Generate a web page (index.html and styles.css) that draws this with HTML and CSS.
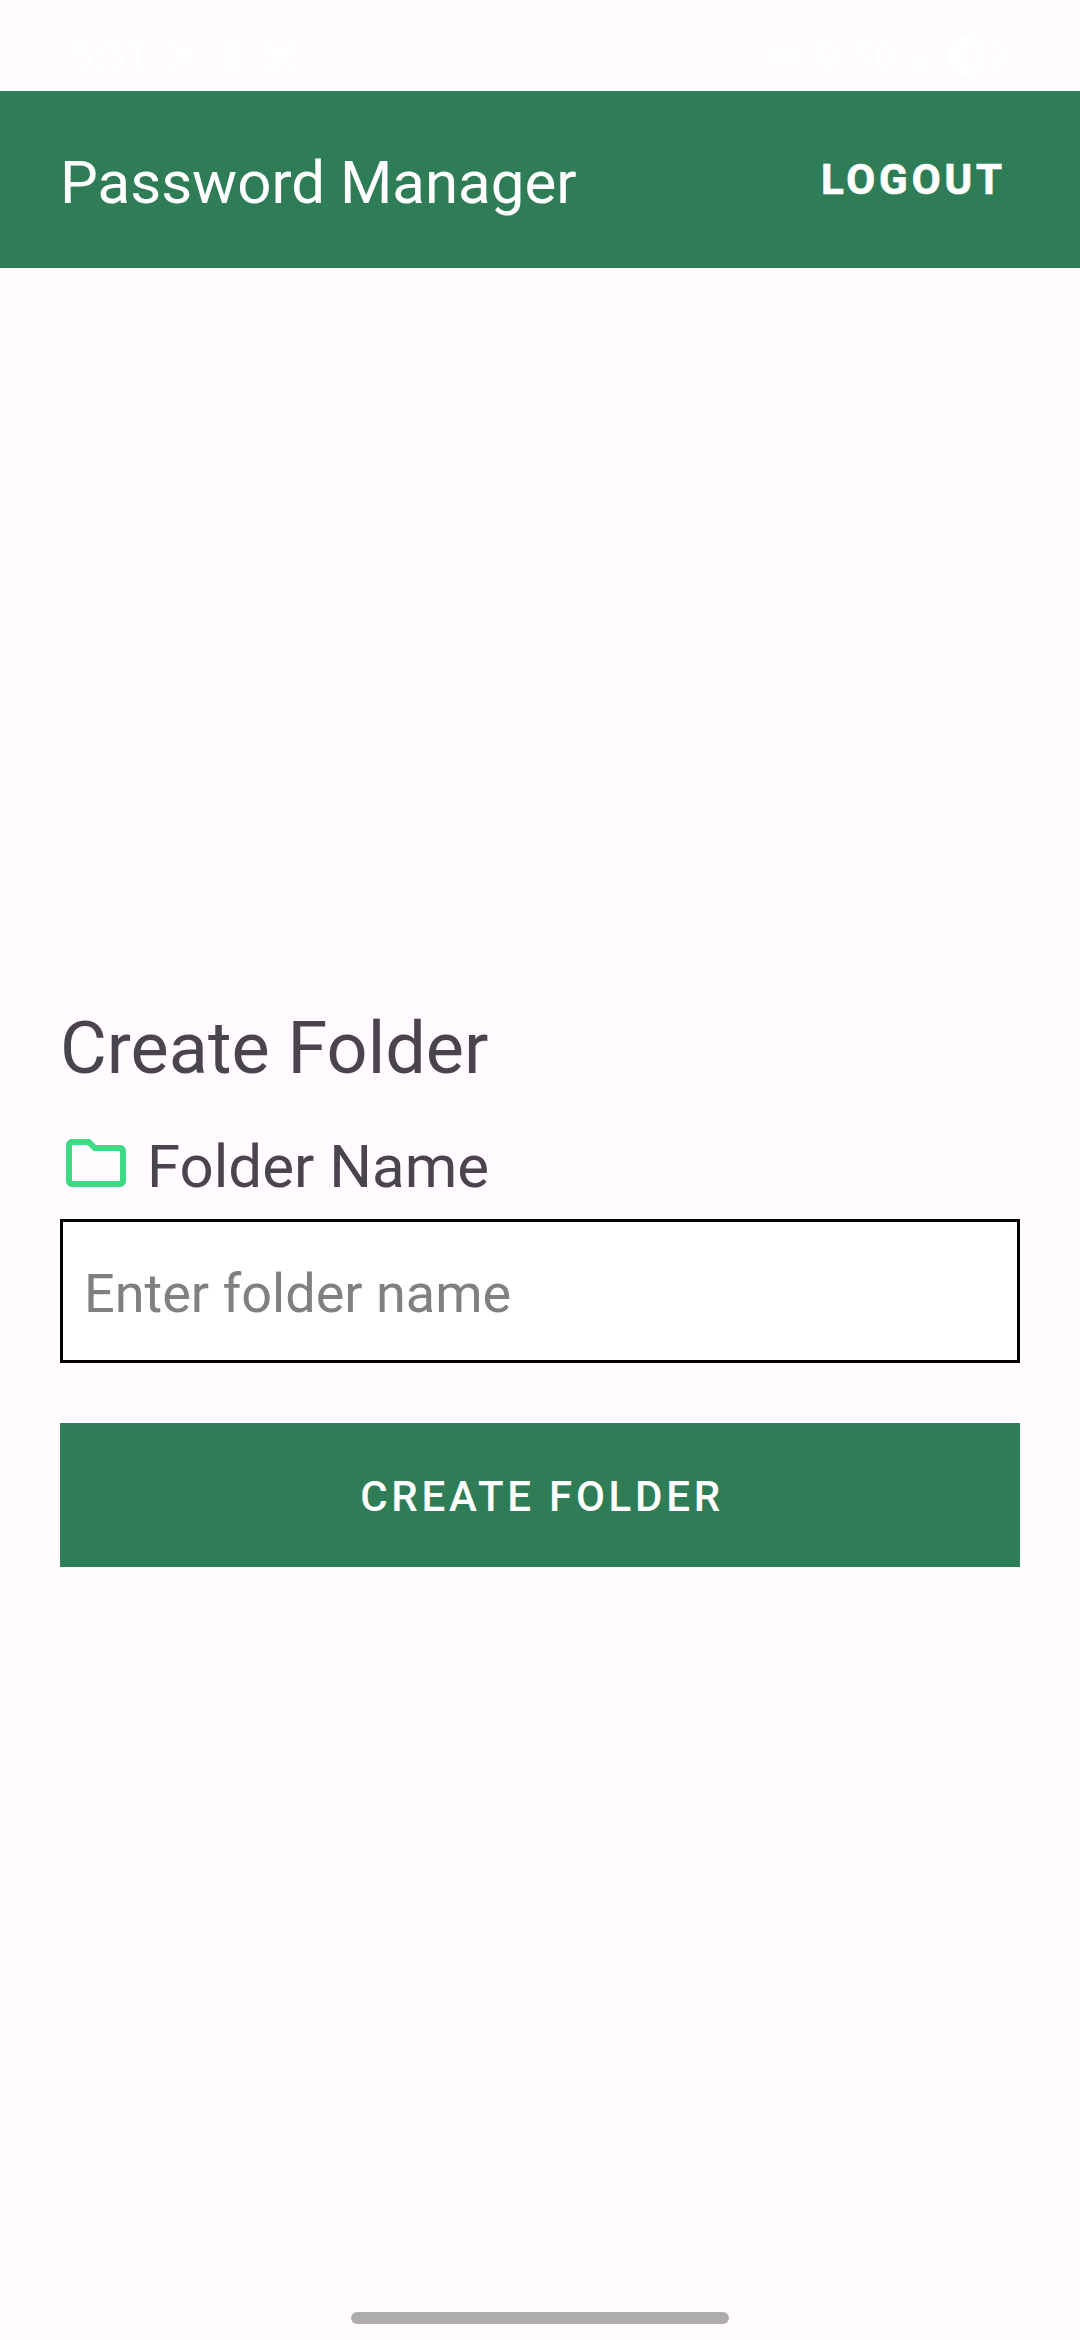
FILE: index.html
```html
<!DOCTYPE html>
<html lang="en">
<head>
<meta charset="utf-8">
<title>Password Manager</title>
<link rel="stylesheet" href="styles.css">
</head>
<body>
<div class="screen">
  <div class="status">
    <div class="status-left">
      <span class="clock">5:31</span>
      <svg class="capture" width="36" height="36" viewBox="0 0 36 36"><path d="M2 9V4q0-2 2-2h5M27 2h5q2 0 2 2v5M34 27v5q0 2-2 2h-5M9 34H4q-2 0-2-2v-5" fill="none" stroke="currentColor" stroke-width="3"/><path d="M12 9h12q3 0 3 3v12q0 3-3 3H12q-3 0-3-3V12q0-3 3-3zm0 14h12v-3l-4-3-4 3-2-1-2 2z" fill="currentColor" fill-rule="evenodd"/></svg>
      <svg class="timer" width="34" height="34" viewBox="0 0 34 34"><circle cx="17" cy="17" r="15.5" fill="none" stroke="currentColor" stroke-width="2.5"/><path d="M12 7h10v4l-3 5 3 6v4H12v-4l3-6-3-5z" fill="none" stroke="currentColor" stroke-width="3"/></svg>
      <svg width="36" height="36" viewBox="0 0 36 36"><circle cx="18" cy="18" r="16.5" fill="none" stroke="currentColor" stroke-width="3"/><path d="M4 9h18l7 5-3 7-8 3-6 7-5-3 6-7-9-5z" fill="currentColor"/></svg>
    </div>
    <div class="status-right">
      <svg class="mute" width="29" height="28" viewBox="0 0 29 28"><path d="M1 1l20 24V2L10 8H1v11h6l14 8" fill="currentColor"/><path d="M24 2l4 4-4 4 4 4-4 4 4 4-4 4" fill="none" stroke="currentColor" stroke-width="2.5"/></svg>
      <svg class="pin" width="24" height="29" viewBox="0 0 24 29"><path d="M12 0a11.5 11.5 0 0 1 11.5 11.5C23.500 19 12 29 12 29S.5 19 .5 11.500A11.500 11.500 0 0 1 12 0zm0 7a5 5 0 1 0 0 10 5 5 0 0 0 0-10z" fill="currentColor"/></svg>
      <span class="network">5G</span>
      <svg class="signal" width="27" height="26" viewBox="0 0 27 26"><path d="M0 20h4v6H0zM6 15h4v11H6zM12 9h4v17h-4z" fill="currentColor"/><path d="M18 4h3v22h-3zM24 0h3v26h-3z" fill="currentColor" opacity=".4"/></svg>
      <span class="battery">42</span>
    </div>
  </div>
  <header class="app-bar">
    <h1 class="app-title">Password Manager</h1>
    <button class="logout" type="button">LOGOUT</button>
  </header>
  <main class="content">
    <h2 class="heading">Create Folder</h2>
    <label class="field-label" for="folder">
      <svg class="folder" width="72" height="72" viewBox="0 0 24 24"><path d="M9.170 6l2 2H20v10H4V6h5.170M10 4H4c-1.100 0-1.990.9-1.990 2L2 18c0 1.100.9 2 2 2h16c1.100 0 2-.9 2-2V8c0-1.100-.9-2-2-2h-8l-2-2z" fill="currentColor"/></svg>
      <span>Folder Name</span>
    </label>
    <input class="field" id="folder" type="text" placeholder="Enter folder name">
    <button class="submit" type="button">CREATE FOLDER</button>
  </main>
  <div class="home"></div>
</div>
</body>
</html>
```
FILE: styles.css
```css
* { box-sizing: border-box; }
body {
  margin: 0;
  background: #fffbff;
  font-family: Roboto, sans-serif;
}
.screen {
  width: 1080px;
  height: 2340px;
  display: flex;
  flex-direction: column;
}
.status {
  height: 91px;
  padding: 21px 70px 0 72px;
  display: flex;
  justify-content: space-between;
  color: #fff;
}
.status-left, .status-right {
  display: flex;
  align-items: center;
  height: 70px;
}
.clock {
  width: 76px;
  font-size: 38px;
  font-weight: 700;
}
.capture { margin-left: 19px; }
.timer { margin: 0 12px; }
.pin { margin: 0 15px 0 17px; }
.network {
  width: 43px;
  font-size: 34px;
  font-weight: 700;
}
.signal { margin: 6px 15px 0 9px; }
.battery {
  width: 62px;
  height: 42px;
  border-radius: 21px;
  background: linear-gradient(90deg, #fff 40%, #fffdff 40%);
  text-align: center;
  font-size: 32px;
  line-height: 42px;
  font-weight: 700;
  color: #fffbff;
}
.app-bar {
  height: 177px;
  padding: 0 74px 0 60px;
  display: flex;
  align-items: center;
  justify-content: space-between;
  background: #2f7d57;
  color: #fff;
}
.app-title {
  margin: 0;
  padding-top: 6px;
  font-size: 60px;
  line-height: 70px;
  font-weight: 400;
}
.logout {
  border: 0;
  padding: 0;
  background: none;
  color: #fff;
  font: 700 42px/50px Roboto, sans-serif;
  letter-spacing: 3.9px;
  -webkit-text-stroke: 0.7px #fff;
}
.content {
  flex: 1;
  padding: 738px 60px 0;
  display: flex;
  flex-direction: column;
  color: #49454f;
}
.heading {
  margin: 0 0 35px;
  font-size: 72px;
  line-height: 86px;
  font-weight: 400;
}
.field-label {
  display: flex;
  height: 92px;
  gap: 15px;
  font-size: 60px;
  line-height: 79px;
}
.folder { color: #3ddc84; }
.field {
  height: 144px;
  padding: 5px 21px 0;
  border: 3px solid #000;
  border-radius: 0;
  background: #fff;
  color: #000;
  font: 400 54px Roboto, sans-serif;
}
.field::placeholder { color: #808080; }
.submit {
  height: 144px;
  margin-top: 60px;
  padding: 3px 0 0 4px;
  border: 0;
  background: #2f7d57;
  color: #fff;
  font: 500 42px/50px Roboto, sans-serif;
  letter-spacing: 3.75px;
}
.home {
  align-self: center;
  width: 378px;
  height: 12px;
  margin-bottom: 16px;
  border-radius: 6px;
  background: #aeacae;
}
```
